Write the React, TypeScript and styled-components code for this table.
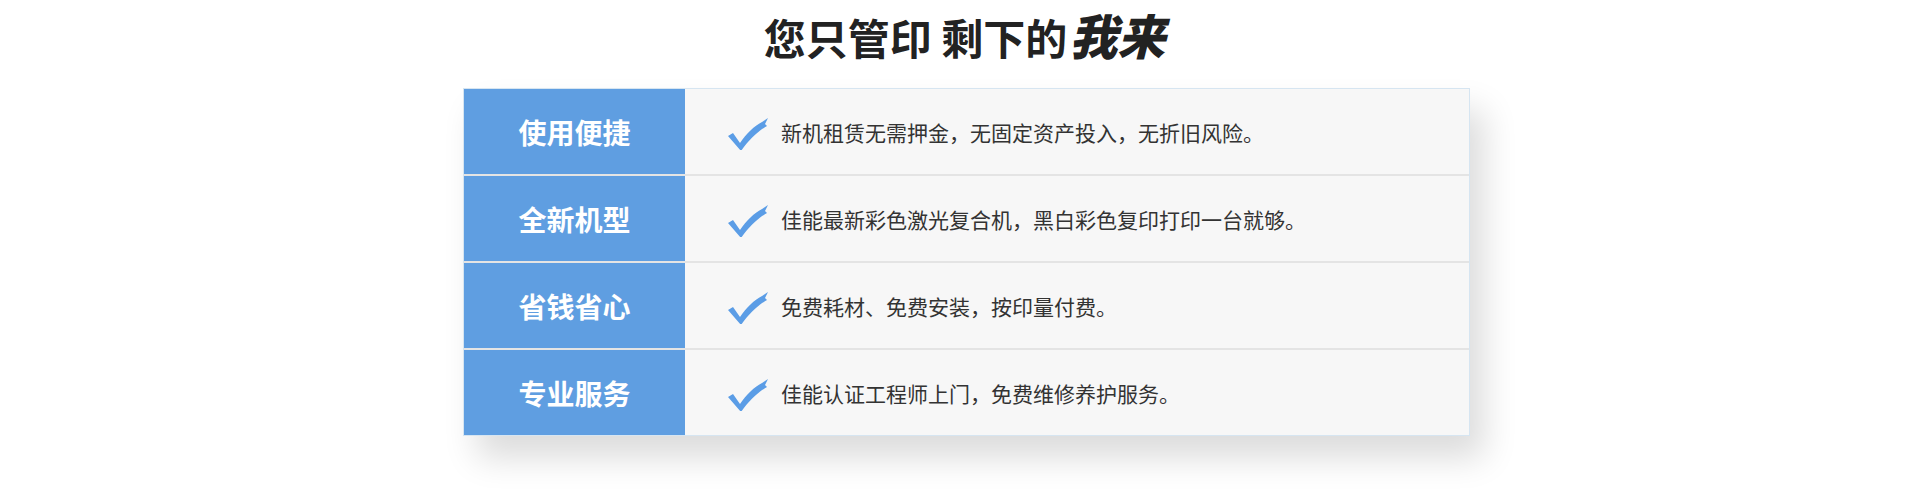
import React from "react";
import styled, { createGlobalStyle } from "styled-components";

const GlobalStyle = createGlobalStyle`
  html, body {
    margin: 0;
    padding: 0;
    background: #ffffff;
  }
  body {
    font-family: "Noto Sans CJK SC", "Noto Sans", sans-serif;
  }
`;

const Page = styled.div`
  width: 1920px;
  height: 493px;
  display: flex;
  flex-direction: column;
  align-items: center;
  padding-left: 13px;
  box-sizing: border-box;
  overflow: hidden;
`;

const TitleBar = styled.div`
  height: 70px;
  display: flex;
  align-items: center;
  justify-content: center;
  margin-bottom: 18px;
`;

const Title = styled.h2`
  margin: 0;
  line-height: 1.4;
  font-size: 42px;
  font-weight: 700;
  color: #222222;
  font-family: "Noto Sans CJK SC", sans-serif;
  padding: 0 6px;
  white-space: nowrap;
`;

const Accent = styled.em`
  font-size: 48px;
  font-style: italic;
  font-weight: 900;
  margin-left: 2px;
  padding-right: 4px;
`;

const Table = styled.div`
  width: 1007px;
  box-sizing: border-box;
  border: 1px solid #d6e5f1;
  background: #f7f7f7;
  box-shadow: 14px 22px 32px rgba(0, 0, 0, 0.14);
  display: flex;
  flex-direction: column;
`;

const Row = styled.div<{ $first?: boolean }>`
  display: flex;
  height: 85px;
  border-top: ${(p) => (p.$first ? "none" : "2px solid #e4e4e4")};
`;

const Label = styled.div`
  width: 221px;
  flex: none;
  background: #5f9ee1;
  color: #ffffff;
  font-size: 28px;
  font-weight: 700;
  display: flex;
  align-items: center;
  justify-content: center;
`;

const Content = styled.div`
  flex: 1;
  display: flex;
  align-items: center;
  padding-left: 41px;
  gap: 13px;
  font-size: 21px;
  color: #333333;
`;

const Check = () => (
  <svg width="42" height="36" viewBox="0 0 42 36">
    <path
      d="M2 22 L7 19 L14 29 C20 20 28 12 36 8 L42 4 L39 10 L41 12 C32 17 22 27 15 37 Z"
      fill="#5b9de6"
    />
  </svg>
);

const rows = [
  { label: "使用便捷", text: "新机租赁无需押金，无固定资产投入，无折旧风险。" },
  { label: "全新机型", text: "佳能最新彩色激光复合机，黑白彩色复印打印一台就够。" },
  { label: "省钱省心", text: "免费耗材、免费安装，按印量付费。" },
  { label: "专业服务", text: "佳能认证工程师上门，免费维修养护服务。" },
];

export default function App() {
  return (
    <Page>
      <GlobalStyle />
      <TitleBar>
        <Title>
          您只管印 剩下的<Accent>我来</Accent>
        </Title>
      </TitleBar>
      <Table>
        {rows.map((r, i) => (
          <Row key={r.label} $first={i === 0}>
            <Label>{r.label}</Label>
            <Content>
              <Check />
              <span>{r.text}</span>
            </Content>
          </Row>
        ))}
      </Table>
    </Page>
  );
}
